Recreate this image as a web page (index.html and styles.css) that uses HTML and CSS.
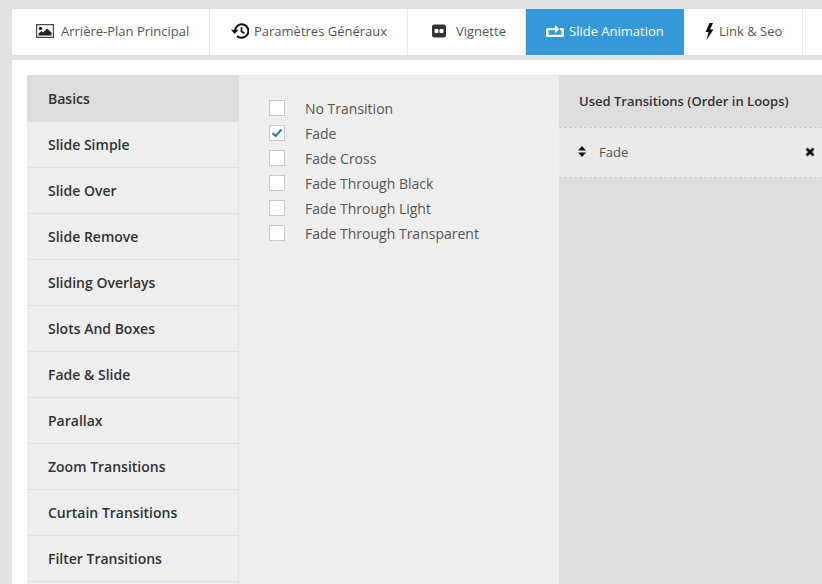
FILE: index.html
```html
<!DOCTYPE html>
<html lang="fr">
<head>
<meta charset="utf-8">
<title>Slide Animation</title>
<link rel="stylesheet" href="styles.css">
</head>
<body>
<nav class="tabs">
  <a class="tab tab-bg">
    <svg class="ico ico-img" viewBox="0 0 18 14"><path fill-rule="evenodd" fill="#4a4a40" d="M0 0h18v14H0zM1.200 1.200v11.600h15.600V1.200z"/><circle cx="4.500" cy="4.500" r="1.700" fill="#222"/><path fill="#222" d="M2.500 11.500v-2l3-2.500 1.500 1.500 4-4 4.500 4v3z"/></svg>
    <span>Arrière-Plan Principal</span>
  </a>
  <a class="tab tab-gen">
    <svg class="ico ico-hist" viewBox="0 0 18 16"><path fill="none" stroke="#111" stroke-width="2.100" d="M4 8a6.700 6.700 0 1 1 2.100 4.900"/><path fill="#111" d="M0 6.800h7.500L3.700 11z"/><path fill="none" stroke="#111" stroke-width="1.700" d="M10.500 4.200v4.400l2.900 1.700"/></svg>
    <span>Paramètres Généraux</span>
  </a>
  <a class="tab tab-thumb">
    <svg class="ico ico-thumb" viewBox="0 0 14 14"><rect width="14" height="13" y="0.500" rx="2.500" fill="#333"/><rect x="2.500" y="5" width="4" height="4" rx="1" fill="#fff"/><rect x="7.500" y="5" width="4" height="4" rx="1" fill="#fff"/></svg>
    <span>Vignette</span>
  </a>
  <a class="tab tab-on">
    <svg class="ico ico-anim" viewBox="0 0 18 12"><path fill="#fff" d="M1.500 3H6.500V5.300H2.500V9.700H15.500V5.300H14V3H16.500Q18 3 18 4.500V10.500Q18 12 16.500 12H1.500Q0 12 0 10.500V4.500Q0 3 1.500 3z"/><path fill="#fff" d="M6.500 3H9V0L13.500 4.200 9 8.200V5.300H6.500z"/></svg>
    <span>Slide Animation</span>
  </a>
  <a class="tab tab-link">
    <svg class="ico ico-bolt" viewBox="0 0 9 17"><path fill="#111" d="M4.500 0 0.500 9h3L1.500 17 8.500 6.500h-3.300L8 0z"/></svg>
    <span>Link &amp; Seo</span>
  </a>
</nav>
<main class="panel">
  <div class="columns">
    <ul class="side">
      <li class="side-item side-on">Basics</li>
      <li class="side-item">Slide Simple</li>
      <li class="side-item">Slide Over</li>
      <li class="side-item">Slide Remove</li>
      <li class="side-item">Sliding Overlays</li>
      <li class="side-item">Slots And Boxes</li>
      <li class="side-item">Fade &amp; Slide</li>
      <li class="side-item">Parallax</li>
      <li class="side-item">Zoom Transitions</li>
      <li class="side-item">Curtain Transitions</li>
      <li class="side-item">Filter Transitions</li>
    </ul>
    <ul class="options">
      <li class="opt"><span class="box"></span>No Transition</li>
      <li class="opt"><span class="box"><svg class="tick" viewBox="0 0 12 10"><path fill="none" stroke="#2c7f9b" stroke-width="2.200" d="M1.500 5l3.200 3L10.500 1.500"/></svg></span>Fade</li>
      <li class="opt"><span class="box"></span>Fade Cross</li>
      <li class="opt"><span class="box"></span>Fade Through Black</li>
      <li class="opt"><span class="box"></span>Fade Through Light</li>
      <li class="opt"><span class="box"></span>Fade Through Transparent</li>
    </ul>
    <section class="used">
      <h2 class="used-title">Used Transitions (Order in Loops)</h2>
      <div class="used-row">
        <svg class="sort" viewBox="0 0 8 11"><path fill="#111" d="M4 0l4 4.400H0zM4 11L0 6.600h8z"/></svg>
        <span class="used-name">Fade</span>
        <svg class="close" viewBox="0 0 10 10"><path fill="none" stroke="#111" stroke-width="2.800" d="M1.500 1.500l7 7M8.500 1.500l-7 7"/></svg>
      </div>
    </section>
  </div>
</main>
</body>
</html>
```
FILE: styles.css
```css
* { box-sizing: border-box; }
html, body { margin: 0; height: 100%; overflow: hidden; }
body {
  background: #e1e1e1;
  padding: 9px 0 0 12px;
  font-family: "Open Sans", sans-serif;
  font-size: 13px;
  color: #555;
}
ul { list-style: none; margin: 0; padding: 0; }

.tabs {
  display: grid;
  grid-template-columns: 198px 198px 118px 158px 119px 1fr;
  height: 46px;
  background: #fff;
  margin-bottom: 5px;
}
.tab {
  display: flex;
  align-items: center;
  padding-bottom: 2px;
  border-right: 1px solid #e8e8e8;
  color: #555;
}
.tab-bg { padding-left: 24px; gap: 7px; }
.tab-gen { padding-left: 21px; gap: 5px; }
.tab-thumb { padding-left: 24px; gap: 10px; }
.tab-on { padding-left: 20px; gap: 5px; background: #3498d9; color: #fff; border-right: 0; }
.tab-link { padding-left: 21px; gap: 5px; }
.ico { display: block; flex: none; }
.ico-img { width: 18px; height: 14px; }
.ico-hist { width: 18px; height: 16px; }
.ico-thumb { width: 14px; height: 14px; }
.ico-anim { width: 18px; height: 12px; }
.ico-bolt { width: 9px; height: 17px; }

.panel {
  background: #fff;
  padding: 15px 0 0 15px;
  height: 529px;
}
.columns {
  display: grid;
  grid-template-columns: 212px 320px 1fr;
  height: 100%;
  overflow: hidden;
}
.side { background: #eee; border-right: 1px solid #e2e2e2; }
.side-item {
  height: 46px;
  padding: 0 0 0 21px;
  line-height: 46px;
  font-size: 14px;
  font-weight: 600;
  color: #333;
  border-bottom: 1px solid #e0e0e0;
}
.side-on { height: 47px; line-height: 48px; background: #ddd; border-bottom: 0; }

.options {
  background: #eee;
  padding: 20px 0 0 30px;
  border-top: 1px solid #e4e4e4;
}
.opt {
  display: flex;
  align-items: center;
  height: 25px;
  font-size: 14px;
  color: #555;
}
.box {
  display: flex;
  align-items: center;
  justify-content: center;
  width: 16px;
  height: 16px;
  margin: 0 20px 2px 0;
  background: #fff;
  border: 1px solid #c8c8c8;
}
.tick { width: 12px; height: 10px; display: block; }

.used { background: #ddd; }
.used-title {
  margin: 0;
  height: 52px;
  padding: 0 0 0 20px;
  line-height: 52px;
  font-size: 13px;
  font-weight: 600;
  color: #333;
}
.used-row {
  display: flex;
  align-items: center;
  height: 51px;
  padding: 0 7px 2px 19px;
  background: #eaeaea;
  border-top: 1px dashed #ccc;
  border-bottom: 1px dashed #ccc;
  font-size: 13px;
  color: #555;
}
.sort { width: 8px; height: 11px; margin-right: 13px; flex: none; }
.used-name { flex: 1; }
.close { width: 10px; height: 10px; flex: none; }
```
